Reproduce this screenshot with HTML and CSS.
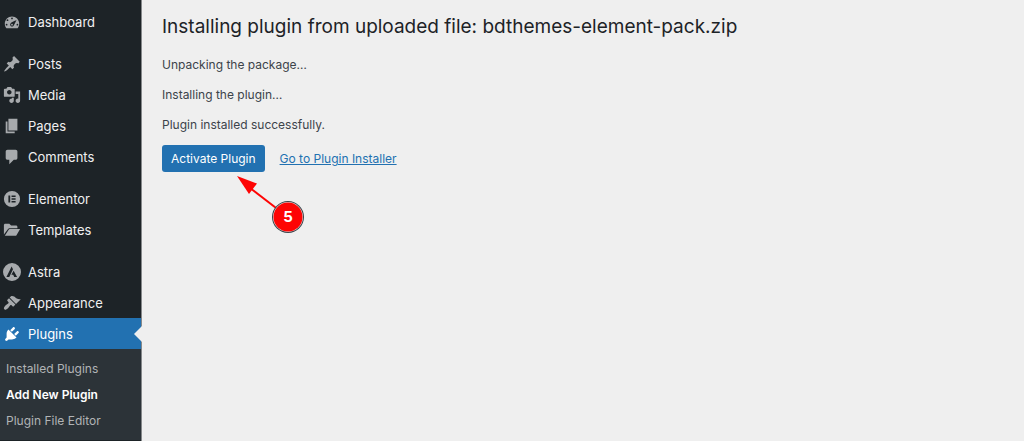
FILE: index.html
```html
<!DOCTYPE html>
<html lang="en">
<head>
    <meta charset="UTF-8">
    <meta name="viewport" content="width=device-width, initial-scale=1.0">
    <title>Installing plugin</title>
    <link rel="stylesheet" href="styles.css">
</head>
<body>
    <nav class="sidebar" aria-label="Main menu">
        <ul class="menu">
            <li><a href="#">
                <svg viewBox="0 0 20 20"><path d="M3.76 17h12.48c1.1-1.37 1.76-3.11 1.76-5 0-4.42-3.58-8-8-8s-8 3.58-8 8c0 1.89.66 3.63 1.76 5zM9 6c0-.55.45-1 1-1s1 .45 1 1c0 .56-.45 1-1 1s-1-.44-1-1zM4 8c0-.55.45-1 1-1s1 .45 1 1c0 .56-.45 1-1 1s-1-.44-1-1zm4.52 3.4c.84-.83 6.51-3.5 6.51-3.5s-2.66 5.68-3.49 6.51c-.84.84-2.18.84-3.02 0-.83-.83-.83-2.18 0-3.01zM3 13c0-.55.45-1 1-1s1 .45 1 1c0 .56-.45 1-1 1s-1-.44-1-1zm6 0c0 .55.45 1 1 1s1-.45 1-1c0-.56-.45-1-1-1s-1 .44-1 1zm6 0c0-.55.45-1 1-1s1 .45 1 1c0 .56-.45 1-1 1s-1-.44-1-1z"/></svg>
                Dashboard</a></li>
            <li class="group"><a href="#">
                <svg viewBox="0 0 20 20"><path d="M10.44 3.02l1.82-1.82 6.36 6.35-1.83 1.82c-1.05-.68-2.48-.57-3.41.36l-.75.75c-.92.93-1.04 2.35-.35 3.41l-1.83 1.82-2.41-2.41-2.8 2.79c-.42.42-3.38 2.71-3.8 2.29s1.86-3.39 2.28-3.81l2.79-2.79L4.1 9.36l1.83-1.82c1.05.69 2.48.57 3.4-.36l.75-.75c.93-.92 1.05-2.35.36-3.41z"/></svg>
                Posts</a></li>
            <li><a href="#">
                <svg viewBox="0 0 20 20"><path d="M13 11V4c0-.55-.45-1-1-1h-1.67L9 1H5L3.67 3H2c-.55 0-1 .45-1 1v7c0 .55.45 1 1 1h10c.55 0 1-.45 1-1zM7 4.5c1.38 0 2.5 1.12 2.5 2.5S8.38 9.5 7 9.5 4.5 8.38 4.5 7 5.62 4.5 7 4.5zM14 6h5v10.5c0 1.38-1.12 2.5-2.5 2.5S14 17.88 14 16.5s1.12-2.5 2.5-2.5c.17 0 .34.02.5.05V9h-3V6zm-4 8.05V13h2v3.5c0 1.38-1.12 2.5-2.5 2.5S7 17.88 7 16.5 8.12 14 9.5 14c.17 0 .34.02.5.05z"/></svg>
                Media</a></li>
            <li><a href="#">
                <svg viewBox="0 0 20 20"><path d="M6 15V2h10v13H6zm-1 1h8v2H3V5h2v11z"/></svg>
                Pages</a></li>
            <li><a href="#">
                <svg viewBox="0 0 20 20"><path d="M5 2h9c1.1 0 2 .9 2 2v7c0 1.1-.9 2-2 2h-2l-5 5v-5H5c-1.1 0-2-.9-2-2V4c0-1.1.9-2 2-2z"/></svg>
                Comments</a></li>
            <li class="group"><a href="#">
                <svg viewBox="0 0 20 20"><path fill-rule="evenodd" d="M10 1a9 9 0 1 0 0 18 9 9 0 0 0 0-18zM6 6h2v8H6zM9.500 6H14v1.700H9.500zM9.500 9.200H14v1.700H9.500zM9.500 12.300H14V14H9.500z"/></svg>
                Elementor</a></li>
            <li><a href="#">
                <svg viewBox="0 0 20 20"><path d="M1 15V4.500C1 3.700 1.700 3 2.500 3H7l2 2h5.500c.8 0 1.500.7 1.500 1.500V8H7.500c-.9 0-1.700.5-2.100 1.200zM2 16.500l4.300-6.700c.3-.5.7-.8 1.200-.8H19l-4 6.700c-.3.500-.7.800-1.200.8z"/></svg>
                Templates</a></li>
            <li class="group"><a href="#">
                <svg viewBox="0 0 20 20"><path fill-rule="evenodd" d="M10 0a10 10 0 1 0 0 20 10 10 0 0 0 0-20zM9.600 3.800l1.500 3.200L7 15.500H3.800zM11.800 8.500l3.900 7h-3.200l-1.200-2.500H9.300z"/></svg>
                Astra</a></li>
            <li><a href="#">
                <svg viewBox="0 0 20 20"><path d="M14.480 11.060L7.410 3.990l1.500-1.500c.5-.56 2.300-.47 3.510.32 1.210.8 1.430 1.280 2.910 2.100 1.180.64 2.450 1.260 4.450.85zm-.71.71L6.700 4.700 4.930 6.470c-.39.39-.39 1.020 0 1.410l1.060 1.060c.39.39.39 1.030 0 1.420-.6.6-1.430 1.110-2.210 1.690-.35.26-.7.53-1.010.84C1.430 14.230.4 16.080 1.400 17.070c.99 1 2.840-.03 4.180-1.360.31-.31.58-.66.85-1.020.57-.78 1.080-1.610 1.690-2.210.39-.39 1.020-.39 1.410 0l1.060 1.060c.39.39 1.020.39 1.410 0z"/></svg>
                Appearance</a></li>
            <li class="current"><a href="#">
                <svg viewBox="0 0 20 20"><path d="M13.110 4.360L9.870 7.600 8 5.730l3.240-3.240c.35-.34 1.050-.2 1.560.32.52.51.66 1.210.31 1.550zm-8 1.770l.91-1.120 9.010 9.010-1.190.84c-.71.71-2.630 1.160-3.820 1.160H6.140L4.900 17.260c-.59.59-1.540.59-2.120 0-.59-.58-.59-1.530 0-2.120L4 13.880v-3.850c0-1.200.4-3.190 1.110-3.900zm7.260 3.970l3.240-3.240c.34-.35 1.040-.21 1.550.31.52.51.66 1.210.31 1.550l-3.240 3.250z"/></svg>
                Plugins</a>
                <ul class="submenu">
                    <li><a href="#">Installed Plugins</a></li>
                    <li><a href="#" class="active">Add New Plugin</a></li>
                    <li><a href="#">Plugin File Editor</a></li>
                </ul>
            </li>
        </ul>
    </nav>

    <main class="content">
        <h1>Installing plugin from uploaded file: bdthemes-element-pack.zip</h1>
        <div class="log">
            <p>Unpacking the package…</p>
            <p>Installing the plugin…</p>
            <p>Plugin installed successfully.</p>
        </div>
        <div class="actions">
            <button type="button" class="button">Activate Plugin</button>
            <a href="#">Go to Plugin Installer</a>
            <!-- step marker with an arrow to the button -->
            <div class="marker">
                <svg viewBox="0 0 70 60">
                    <path d="M14 12L44 35" stroke="#fe0404" stroke-width="2"/>
                    <path d="M1 0L21 7.500L13 18z" fill="#fe0404"/>
                    <circle cx="52" cy="41" r="16" fill="#3c444a"/>
                    <circle cx="52" cy="41" r="15" fill="#e9dcdc"/>
                    <circle cx="52" cy="41" r="14.500" fill="#fe0404"/>
                </svg>
                <span>5</span>
            </div>
        </div>
    </main>
</body>
</html>
```

FILE: styles.css
```css
* {
    box-sizing: border-box;
}
body {
    margin: 0;
    min-height: 100vh;
    display: flex;
    background: #efefef;
    color: #3c434a;
    font-family: Inter, "Liberation Sans", sans-serif;
    font-size: 12px;
}
ul {
    list-style: none;
    margin: 0;
    padding: 0;
}
.sidebar {
    flex: none;
    width: 142px;
    background: #1d2327;
    border-right: 1px solid #85888a;
}
.menu {
    padding: 6px 0 1px;
}
.menu a {
    display: flex;
    align-items: center;
    gap: 7px;
    height: 31px;
    padding-left: 3px;
    color: #f0f0f1;
    font-size: 13px;
    text-decoration: none;
}
.menu svg {
    width: 18px;
    height: 18px;
    fill: #a7aaad;
}
.menu .group {
    margin-top: 11px;
}
.menu .current > a {
    position: relative;
    background: #2271b1;
    color: #fff;
}
.menu .current svg {
    fill: #fff;
}
.current > a::after {
    content: "";
    position: absolute;
    right: -1px;
    top: 8px;
    border: 8px solid transparent;
    border-left-width: 0;
    border-right-color: #efefef;
}
.submenu {
    padding: 6px 0 7px;
    background: #2c3338;
}
.menu .submenu a {
    height: 26px;
    padding-left: 6px;
    color: #b1b4b6;
    font-size: 12px;
}
.menu .submenu .active {
    color: #fff;
    font-weight: 600;
}
.content {
    flex: 1;
    padding: 12px 20px;
}
h1 {
    margin: 0 0 14px;
    color: #1d2327;
    font-size: 19px;
    font-weight: 400;
    line-height: 30px;
}
.log {
    display: grid;
    gap: 12px;
    margin-bottom: 11px;
}
p {
    margin: 0;
    line-height: 18px;
}
.actions {
    position: relative;
    display: flex;
    align-items: center;
    gap: 15px;
}
.actions a {
    color: #2271b1;
}
.button {
    height: 27px;
    padding: 0 9px;
    border: 0;
    border-radius: 3px;
    background: #2271b1;
    color: #fff;
    font: inherit;
    cursor: pointer;
}
.marker {
    position: absolute;
    left: 74px;
    top: 31px;
    width: 70px;
    height: 60px;
}
.marker svg {
    display: block;
}
.marker span {
    position: absolute;
    left: 36px;
    top: 25px;
    width: 32px;
    color: #fff;
    font-size: 15px;
    font-weight: 700;
    line-height: 32px;
    text-align: center;
}
```
